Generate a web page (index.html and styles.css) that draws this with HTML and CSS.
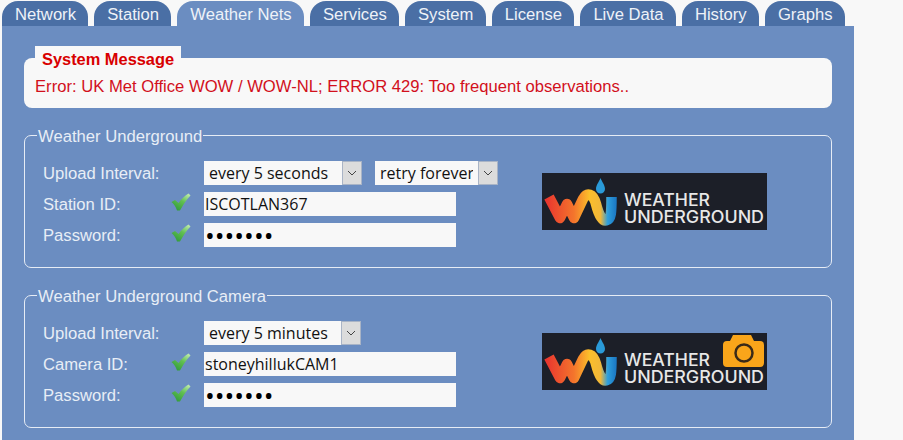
FILE: index.html
```html
<!DOCTYPE html>
<html lang="en">
<head>
    <meta charset="UTF-8">
    <meta name="viewport" content="width=device-width, initial-scale=1.0">
    <title>Weather Nets</title>
    <link rel="stylesheet" href="styles.css">
</head>
<body>
    <svg class="defs" width="0" height="0" aria-hidden="true">
        <defs>
            <linearGradient id="wu-stroke" gradientUnits="userSpaceOnUse" x1="4" y1="0" x2="74" y2="0">
                <stop offset="0" stop-color="#e8352f"/>
                <stop offset="0.4" stop-color="#f4752c"/>
                <stop offset="0.62" stop-color="#fbbf2b"/>
                <stop offset="0.78" stop-color="#f0b73a"/>
                <stop offset="0.88" stop-color="#2f9fdc"/>
                <stop offset="1" stop-color="#1b78c4"/>
            </linearGradient>
            <linearGradient id="check-fill" x1="0.9" y1="0" x2="0.2" y2="1">
                <stop offset="0" stop-color="#c4eeb0"/>
                <stop offset="0.45" stop-color="#62c052"/>
                <stop offset="1" stop-color="#2f9a38"/>
            </linearGradient>
            <symbol id="check" viewBox="0 0 20 20">
                <path d="M0.500 10 L4 8 L7.500 11 C10.500 7 14 3.500 17.500 1.500 L19.500 3.500 C15.500 7.500 12 13 9 18.500 L6 18.500 C5 15 3 12 0.500 10 Z" fill="url(#check-fill)"/>
            </symbol>
            <symbol id="wu-mark" viewBox="0 0 225 57">
                <rect width="225" height="57" fill="#1c1f28"/>
                <path d="M7 24 L18 45 L25 31 L32 45 L41 26 C45 19 51 20 54 31 C57 43 61 49 65 47 C69 46 69.500 40 69.500 24" fill="none" stroke="url(#wu-stroke)" stroke-width="10.500" stroke-linejoin="round" stroke-linecap="butt"/>
                <path d="M58.500 5 C60 9 63 12 63 16 A4.500 4.500 0 0 1 54 16 C54 12 57 9 58.500 5 Z" fill="#2a9ad8"/>
                <text class="logo-text" x="82" y="33" textLength="86" lengthAdjust="spacingAndGlyphs">WEATHER</text>
                <text class="logo-text" x="82" y="50" textLength="140" lengthAdjust="spacingAndGlyphs">UNDERGROUND</text>
            </symbol>
        </defs>
    </svg>

    <nav class="tabs">
        <a class="tab">Network</a>
        <a class="tab">Station</a>
        <a class="tab active">Weather Nets</a>
        <a class="tab">Services</a>
        <a class="tab">System</a>
        <a class="tab">License</a>
        <a class="tab">Live Data</a>
        <a class="tab">History</a>
        <a class="tab">Graphs</a>
    </nav>

    <main class="panel">
        <fieldset class="message">
            <legend>System Message</legend>
            <p>Error: UK Met Office WOW / WOW-NL; ERROR 429: Too frequent observations..</p>
        </fieldset>

        <fieldset class="net">
            <legend>Weather Underground</legend>
            <div class="net-row">
                <div class="net-form">
                    <label>Upload Interval:</label>
                    <span></span>
                    <div class="selects">
                        <div class="select-box">
                            <select class="w-interval"><option>every 5 seconds</option></select>
                            <span class="drop"><svg width="10" height="6" viewBox="0 0 10 6"><path d="M1 1 L5 5 L9 1" fill="none" stroke="#444" stroke-width="1"/></svg></span>
                        </div>
                        <div class="select-box">
                            <select class="w-retry"><option>retry forever</option></select>
                            <span class="drop"><svg width="10" height="6" viewBox="0 0 10 6"><path d="M1 1 L5 5 L9 1" fill="none" stroke="#444" stroke-width="1"/></svg></span>
                        </div>
                    </div>
                    <label>Station ID:</label>
                    <svg class="check"><use href="#check"/></svg>
                    <input type="text" value="ISCOTLAN367">
                    <label>Password:</label>
                    <svg class="check"><use href="#check"/></svg>
                    <input type="password" value="secret1">
                </div>
                <svg class="logo" viewBox="0 0 225 57"><use href="#wu-mark"/></svg>
            </div>
        </fieldset>

        <fieldset class="net">
            <legend>Weather Underground Camera</legend>
            <div class="net-row">
                <div class="net-form">
                    <label>Upload Interval:</label>
                    <span></span>
                    <div class="selects">
                        <div class="select-box">
                            <select class="w-camera"><option>every 5 minutes</option></select>
                            <span class="drop"><svg width="10" height="6" viewBox="0 0 10 6"><path d="M1 1 L5 5 L9 1" fill="none" stroke="#444" stroke-width="1"/></svg></span>
                        </div>
                    </div>
                    <label>Camera ID:</label>
                    <svg class="check"><use href="#check"/></svg>
                    <input type="text" value="stoneyhillukCAM1">
                    <label>Password:</label>
                    <svg class="check"><use href="#check"/></svg>
                    <input type="password" value="secret1">
                </div>
                <svg class="logo" viewBox="0 0 225 57">
                    <use href="#wu-mark"/>
                    <path d="M185 8 L188 8 L191 2 L209 2 L212 8 L218 8 Q222 8 222 12 L222 30 Q222 34 218 34 L185 34 Q181 34 181 30 L181 12 Q181 8 185 8 Z" fill="#f9a51a"/>
                    <circle cx="202" cy="20" r="8.500" fill="none" stroke="#3a2a18" stroke-width="2.500"/>
                </svg>
            </div>
        </fieldset>
    </main>
</body>
</html>
```

FILE: styles.css
```css
html, body {
    margin: 0;
    padding: 0;
}

body {
    background: #f8f8f8;
    font-family: "Liberation Sans", Arial, sans-serif;
    font-size: 16.64px;
    padding-top: 1px;
    height: 439px;
    overflow: hidden;
}

.defs {
    position: absolute;
}

.tabs {
    display: flex;
    gap: 6px;
    margin-left: 2px;
    height: 25px;
}

.tab {
    display: block;
    padding: 0 12.3px 0 13px;
    line-height: 27px;
    height: 25px;
    color: #eef2f8;
    background: #4a6fa5;
    border-radius: 16px 16px 0 0;
}

.tab.active {
    background: #6b8dc1;
}

.panel {
    width: 852px;
    height: 414px;
    margin-left: 2px;
    padding: 20px 22px 0;
    box-sizing: border-box;
    background: #6b8dc1;
}

.message {
    margin: 0 0 16px;
    padding: 7px 11px 11px;
    border: none;
    border-radius: 8px;
    background: #f8f8f8;
    color: #d2101c;
}

.message legend {
    padding: 0 7px;
    height: 24px;
    line-height: 26px;
    font-size: 16.4px;
    font-weight: bold;
    background: #f8f8f8;
    color: #d80000;
}

.message p {
    margin: 0;
    line-height: 20px;
}

.net {
    margin: 0 0 16px;
    padding: 15px 18px 20px;
    border: 1px solid #e6ecf5;
    border-radius: 7px;
    color: #e8eef6;
}

.net legend {
    margin-left: -6px;
    padding: 4px 1px 0;
    line-height: 18px;
}

.net-row {
    display: flex;
    align-items: flex-start;
}

.net-form {
    display: grid;
    grid-template-columns: 129px 32px 294px;
    grid-auto-rows: 24px;
    row-gap: 7px;
    align-items: center;
}

.net-form label {
    padding-top: 1px;
}

.selects {
    display: flex;
    gap: 13px;
}

.select-box {
    display: flex;
    height: 24px;
}

select, input {
    font-family: "Open Sans", "Noto Sans", sans-serif;
    font-size: 16px;
    color: #111;
    background: #f8f8f8;
    border: none;
    border-radius: 0;
    outline: none;
    height: 24px;
    box-sizing: border-box;
}

select {
    appearance: none;
    padding: 0 5px;
}

.w-interval {
    width: 138px;
}

.w-retry {
    width: 103px;
}

.w-camera {
    width: 137px;
}

.drop {
    display: flex;
    align-items: center;
    justify-content: center;
    width: 20px;
    box-sizing: border-box;
    background: #dcdcdc;
    border: 1px solid #a9b4c6;
}

input {
    width: 252px;
    padding: 0 1px;
}

input[type="password"] {
    font-size: 26px;
    color: #000;
}

.check {
    width: 20px;
    height: 20px;
    margin: -4px 0 0 -1px;
}

.logo {
    width: 225px;
    height: 57px;
    margin: 12px 0 0 44px;
}

.logo-text {
    font-family: Inter, "Liberation Sans", sans-serif;
    font-size: 17px;
    font-weight: 500;
    fill: #e8e8e8;
}
```
